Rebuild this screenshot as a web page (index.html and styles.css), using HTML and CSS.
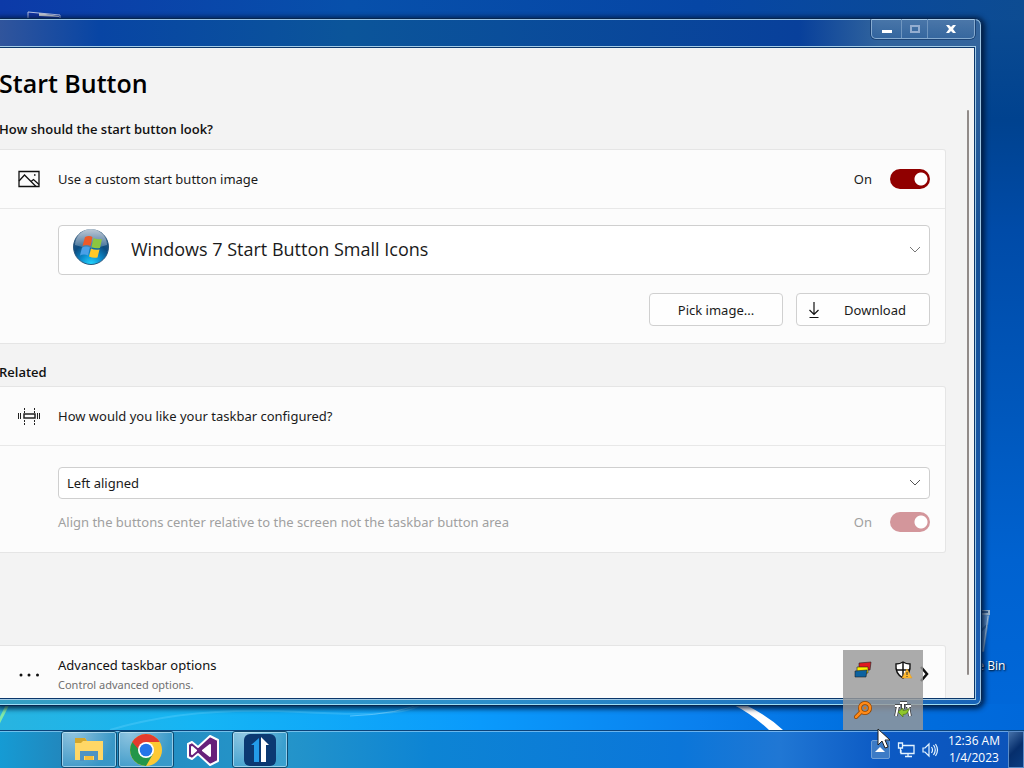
FILE: index.html
```html
<!DOCTYPE html>
<html lang="en">
<head>
    <meta charset="UTF-8">
    <meta name="viewport" content="width=device-width, initial-scale=1.0">
    <title>Start Button</title>
    <link rel="stylesheet" href="styles.css">
</head>
<body>
    <div class="desktop">
        <svg class="wallpaper-streaks" viewBox="0 0 1024 26" preserveAspectRatio="none">
            <path d="M-4 24 L8 0" stroke="#7fe8a8" stroke-width="3"/>
            <path d="M110 26 Q190 2 300 8 T420 0" fill="none" stroke="#6fd6ff" stroke-width="2" opacity=".3"/>
            <path d="M350 12 Q400 10 424 -2" fill="none" stroke="#7fd6ff" stroke-width="1" opacity=".6"/>
            <path d="M732 0 L744 0 Q768 12 783 26 L769 26 Q752 10 732 0Z" fill="#fff"/>
        </svg>
        <svg class="folder-shortcut" width="34" height="12" viewBox="0 0 34 12">
            <path d="M1 12 V1 L33 4 V12Z" fill="#1233a0" stroke="#b8c4e8" stroke-width="1"/>
            <path d="M12 2 L32 5 V6 L12 5Z" fill="#d0d4d8"/>
        </svg>
        <div class="recycle-bin">
            <svg width="36" height="44" viewBox="0 0 36 44">
                <path d="M2 3 H34 L28 43 H8Z" fill="#7da6cc" opacity=".75"/>
                <path d="M2 1 H34 V6 H2Z" fill="#9ebad2"/>
                <path d="M4 3 H32" stroke="#38618f" stroke-width="2"/>
                <path d="M24 9 L22 41 M31 16 L25 22" stroke="#3569a0" stroke-width="2"/>
                <path d="M32 7 L27 42" stroke="#afcce5" stroke-width="1"/>
            </svg>
            <span>Recycle Bin</span>
        </div>

        <main class="window">
            <div class="titlebar">
                <div class="window-buttons">
                    <button class="minimize" aria-label="Minimize">
                        <svg width="12" height="12" viewBox="0 0 12 12"><path d="M1 7h10v3H1z" fill="#fff"/></svg>
                    </button>
                    <button class="maximize" aria-label="Maximize">
                        <svg width="12" height="12" viewBox="0 0 12 12"><path d="M2 3h8v6H2z" fill="none" stroke="#94add0" stroke-width="2"/></svg>
                    </button>
                    <button class="close" aria-label="Close">
                        <svg width="12" height="12" viewBox="0 0 12 12"><path d="M1 2h3l2 2 2-2h3L8 6l3 4H8L6 8l-2 2H1l3-4z" fill="#fff"/></svg>
                    </button>
                </div>
            </div>

            <div class="content">
                <h1>Start Button</h1>
                <div class="page">
                    <h2>How should the start button look?</h2>
                    <section class="card">
                        <div class="card-head">
                            <svg class="icon" width="24" height="24" viewBox="0 0 24 24" fill="none" stroke="#111" stroke-width="1.3">
                                <path d="M2 4.500h20v15H2z"/>
                                <path d="M2 14l5.500-6L19 19.500M14 14.500l2.500-2 5.500 5"/>
                                <path d="M17 8h1.500"/>
                            </svg>
                            <label for="custom">Use a custom start button image</label>
                            <span class="state">On</span>
                            <input type="checkbox" class="toggle" id="custom" checked>
                        </div>
                        <div class="card-body">
                            <div class="select-box">
                                <svg class="orb" width="38" height="38" viewBox="0 0 38 38">
                                    <defs>
                                        <radialGradient id="orbFill" cx=".5" cy="1" r="1">
                                            <stop offset="0" stop-color="#25d8ff"/>
                                            <stop offset=".3" stop-color="#0c8fd0"/>
                                            <stop offset=".6" stop-color="#0c4c80"/>
                                            <stop offset="1" stop-color="#3f6288"/>
                                        </radialGradient>
                                        <linearGradient id="orbShine" x1="0" y1="0" x2="0" y2="1">
                                            <stop offset="0" stop-color="#fff" stop-opacity=".65"/>
                                            <stop offset="1" stop-color="#fff" stop-opacity=".2"/>
                                        </linearGradient>
                                    </defs>
                                    <circle cx="19" cy="19" r="17.500" fill="url(#orbFill)" stroke="#2a567c"/>
                                    <path d="M3 17 A16 16 0 0 1 35 17 Q19 23 3 17Z" fill="url(#orbShine)"/>
                                    <path d="M13 9q4-2 7.500 0l-2 9q-4-2-8 0z" fill="#ee5a28"/>
                                    <path d="M21.500 10q4 2 8.500 1l-2 9q-4 1-8.500-1z" fill="#8cc63f"/>
                                    <path d="M10 19.500q4-2 8 0l-2 8q-4-2-8 0z" fill="#4aa0e8"/>
                                    <path d="M19 20.500q4 2 8.500 1l-2 8q-4 1-8.500-1z" fill="#ffc928"/>
                                </svg>
                                <select class="large" aria-label="Start button image">
                                    <option>Windows 7 Start Button Small Icons</option>
                                </select>
                                <svg class="chevron" width="12" height="8" viewBox="0 0 12 8"><path d="M1 1l5 5 5-5" fill="none" stroke="#777"/></svg>
                            </div>
                            <div class="actions">
                                <button class="btn">Pick image...</button>
                                <button class="btn">
                                    <svg width="16" height="18" viewBox="0 0 16 18" fill="none" stroke="#111" stroke-width="1.2"><path d="M8 1v12M3.500 9L8 13.500 12.500 9M3.500 16.500h9"/></svg>
                                    <span>Download</span>
                                </button>
                            </div>
                        </div>
                    </section>

                    <h2>Related</h2>
                    <section class="card">
                        <div class="card-head">
                            <svg class="icon" width="24" height="24" viewBox="0 0 24 24" fill="none" stroke="#222">
                                <path d="M7 10h11v4H7z" stroke-width="1.500"/>
                                <path d="M1.500 9v6M3.500 9v6M20.500 9v6M22.500 9v6"/>
                                <path d="M7.500 4v5M17.500 4v5M7.500 16v5M17.500 16v5" stroke-dasharray="2 1"/>
                            </svg>
                            <label for="align">How would you like your taskbar configured?</label>
                        </div>
                        <div class="card-body taskbar-options">
                            <div class="select-box">
                                <select id="align">
                                    <option>Left aligned</option>
                                    <option>Center aligned</option>
                                </select>
                                <svg class="chevron" width="12" height="8" viewBox="0 0 12 8"><path d="M1 1l5 5 5-5" fill="none" stroke="#555"/></svg>
                            </div>
                            <div class="option disabled">
                                <label for="center">Align the buttons center relative to the screen not the taskbar button area</label>
                                <span class="state">On</span>
                                <input type="checkbox" class="toggle" id="center" checked disabled>
                            </div>
                        </div>
                    </section>

                    <a href="#" class="card advanced">
                        <svg class="icon" width="24" height="24" viewBox="0 0 24 24" fill="#111"><circle cx="4" cy="12" r="1.500"/><circle cx="12" cy="12" r="1.500"/><circle cx="20.500" cy="12" r="1.500"/></svg>
                        <span class="advanced-text">
                            <span>Advanced taskbar options</span>
                            <small>Control advanced options.</small>
                        </span>
                        <svg width="10" height="18" viewBox="0 0 10 18"><path d="M2 1l6 7-6 7" fill="none" stroke="#111" stroke-width="2.500"/></svg>
                    </a>
                </div>
                <div class="scroll-thumb"></div>
            </div>
        </main>

        <div class="tray-popup">
            <svg width="20" height="20" viewBox="0 0 20 20" stroke="#222" stroke-width=".6">
                <path d="M6 3l12-1-1 8H6z" fill="#e01820"/>
                <path d="M4 7l11 0v6H4z" fill="#fff000"/>
                <path d="M2 11l12-1-1 7H2z" fill="#0c62a0"/>
            </svg>
            <svg width="20" height="20" viewBox="0 0 20 20">
                <path d="M10 2q3 2 7 2 1 10-7 14Q2 14 3 4q4 0 7-2z" fill="#fff" stroke="#111" stroke-width="1.400"/>
                <path d="M10 2v16M3 10h14" stroke="#111" stroke-width="1.500"/>
                <path d="M14 9l5 9H9z" fill="#ffb92e" stroke="#e0961b" stroke-width=".5"/>
                <path d="M14 12v3M14 16v1" stroke="#333"/>
            </svg>
            <svg width="20" height="20" viewBox="0 0 20 20" fill="none">
                <path d="M8 12l-5 5" stroke="#914500" stroke-width="4" stroke-linecap="round"/>
                <circle cx="12" cy="8" r="5" stroke="#914500" stroke-width="4"/>
                <path d="M8 12l-5 5" stroke="#ff8a18" stroke-width="2.500" stroke-linecap="round"/>
                <circle cx="12" cy="8" r="5" stroke="#ff8a18" stroke-width="2.500"/>
                <circle cx="12" cy="8" r="1.500" fill="#e87508"/>
            </svg>
            <svg width="20" height="20" viewBox="0 0 20 20" fill="none">
                <path d="M2 6h5M5 6l-2 10M7 3h7M10 3v6M13 6h5M15 6l2 10" stroke="#333" stroke-width="3.500"/>
                <path d="M2 6h5M5 6l-2 10M7 3h7M10 3v6M13 6h5M15 6l2 10" stroke="#fff" stroke-width="2"/>
                <path d="M5 12l5-4v2.500q4 0 6-2-1 6-6 6V17z" fill="#8fc72b" stroke="#4c7514" stroke-width=".7"/>
            </svg>
        </div>
    </div>

    <footer class="taskbar">
        <nav class="apps">
            <button class="app running" aria-label="File Explorer">
                <svg width="32" height="32" viewBox="0 0 32 32">
                    <path d="M2 4h10l2 3h16v19H2z" fill="#ffd766"/>
                    <path d="M2 4h10l2 3h-4l-2 2H2z" fill="#d4a72c"/>
                    <path d="M7 27V17h18v10h-4v-5H11v5z" fill="#4e93c2"/>
                    <path d="M12 22h8v4h-8z" fill="#f4bd3a"/>
                </svg>
            </button>
            <button class="app running" aria-label="Chrome">
                <svg width="32" height="32" viewBox="0 0 32 32">
                    <circle cx="16" cy="16" r="16" fill="#fcc934"/>
                    <path d="M16 16L2.200 8A16 16 0 0 0 16 32l7-12z" fill="#23964a"/>
                    <path d="M16 16H9L2.200 8A16 16 0 0 1 29.800 8H16z" fill="#e33b2e"/>
                    <circle cx="16" cy="16" r="8" fill="#fff"/>
                    <circle cx="16" cy="16" r="6.300" fill="#2475e8"/>
                </svg>
            </button>
            <button class="app" aria-label="Visual Studio">
                <svg width="34" height="32" viewBox="0 0 34 32">
                    <path d="M24 2l8 4v21l-8 4L12 20l-6 5-4-2V10l4-2 6 5zM24 11l-7 5.500 7 5.500zM6 13v7l4-3.500z" fill="#67217a" fill-rule="evenodd" stroke="#fff" stroke-width="2" stroke-linejoin="round"/>
                    <path d="M24 11v11l-7-5.500zM6 13l4 3.500L6 20z" fill="#fff"/>
                </svg>
            </button>
            <button class="app running" aria-label="Start button settings">
                <svg width="32" height="32" viewBox="0 0 32 32">
                    <rect width="32" height="32" rx="6" fill="#0b3972"/>
                    <path d="M7 11l8-7v24h-5V11z" fill="#239be9"/>
                    <path d="M17 28V3l8 8h-3v17z" fill="#fff"/>
                </svg>
            </button>
        </nav>
        <div class="tray">
            <button class="show-hidden" aria-label="Show hidden icons">
                <svg width="10" height="6" viewBox="0 0 10 6"><path d="M5 0l5 5H0z" fill="#fff"/></svg>
            </button>
            <svg width="18" height="18" viewBox="0 0 18 18" fill="none" stroke="#e4f4ff" stroke-width="1.300">
                <path d="M6 4.500h11v8H4V9M8 15.500h7M11 13v2M1.500 2v5h4V2zM3.500 7v5"/>
            </svg>
            <svg width="18" height="18" viewBox="0 0 18 18" fill="none" stroke="#e4f4ff" stroke-width="1.200">
                <path d="M2 7h2l4-4v12l-4-4H2zM10.500 6q2 3 0 6M12.500 4q3.500 5 0 10M14.500 3q4 6 0 12"/>
            </svg>
            <div class="clock">
                <time>12:36 AM</time>
                <time>1/4/2023</time>
            </div>
            <button class="show-desktop" aria-label="Show desktop"></button>
        </div>
    </footer>
    <svg class="cursor" width="14" height="21" viewBox="0 0 14 21"><path d="M1 1v16l4-4 3 7 3-1-3-7h5z" fill="#fff" stroke="#222"/></svg>
</body>
</html>
```

FILE: styles.css
```css
* {
    box-sizing: border-box;
}
body {
    margin: 0;
    height: 100vh;
    display: flex;
    flex-direction: column;
    overflow: hidden;
    position: relative;
    font-family: "Noto Sans", "Open Sans", sans-serif;
    font-size: 13px;
    line-height: 20px;
    color: #1a1a1a;
    background: #0058bd;
}
button, select, input {
    font: inherit;
    color: inherit;
    margin: 0;
}

/* Desktop */
.desktop {
    flex: 1;
    min-height: 0;
    position: relative;
    background:
        linear-gradient(90deg, #28b4e0 0, #15b5f5 200px, #0a9afc 480px, #0a80ee 700px, #0070e0 850px, #0068da 100%) bottom / 100% 26px no-repeat,
        linear-gradient(90deg, #0c3aa8 0, #0750ab 350px, #0646a5 700px, #0d4c92 100%) top / 100% 20px no-repeat,
        linear-gradient(#0d4c92 0, #00428f 120px, #004ba8 230px, #0058bd 420px, #0062d0 560px, #0068da 100%);
}
.wallpaper-streaks {
    position: absolute;
    left: 0;
    bottom: 0;
    width: 100%;
    height: 26px;
}
.folder-shortcut {
    position: absolute;
    left: 27px;
    top: 11px;
}
.recycle-bin {
    position: absolute;
    right: 19px;
    bottom: 55px;
    width: 68px;
    display: flex;
    flex-direction: column;
    align-items: center;
    gap: 4px;
    padding-left: 6px;
    color: #fff;
    font-family: "Open Sans", sans-serif;
    font-size: 12px;
    line-height: 18px;
    white-space: nowrap;
    text-shadow: 1px 1px 2px #000;
}

/* Window */
.window {
    position: absolute;
    left: -2px;
    right: 42px;
    top: 18px;
    bottom: 24px;
    display: flex;
    flex-direction: column;
    padding: 0 7px 7px 0;
    border: 1px solid #06264f;
    border-radius: 0 7px 7px 0;
    background:
        linear-gradient(90deg, #35a0c4, #2b8fcb 50%, #1763b8) bottom / 100% 8px no-repeat,
        linear-gradient(90deg, #31559c 0, #0845a4 100px, #0b559a 350px, #08409b 800px, #30639d 880px, #34659d 100%) top / 100% 29px no-repeat,
        linear-gradient(#34659d, #155096 35%, #1b5eb4);
    box-shadow: inset -1px 0 #9cc5e5, inset 0 1px #9cc5e5, inset 0 -1px #9cdcf4, 1px 1px 5px 2px rgba(0, 20, 50, 0.8);
}
.titlebar {
    flex: none;
    height: 29px;
    display: flex;
    justify-content: flex-end;
}
.window-buttons {
    display: flex;
    height: 20px;
    margin-right: -1px;
    border: 1px solid #86abd0;
    border-top: 0;
    border-radius: 0 0 5px 5px;
    box-shadow: 0 0 0 1px rgba(5, 35, 80, 0.5);
}
.window-buttons button {
    display: flex;
    align-items: center;
    justify-content: center;
    padding: 0;
    border: 0;
    background: linear-gradient(rgba(255, 255, 255, 0.12), rgba(255, 255, 255, 0.02));
}
.window-buttons .minimize {
    width: 29px;
}
.window-buttons .maximize {
    width: 27px;
    border-left: 1px solid #6f96c0;
    border-right: 1px solid #6f96c0;
}
.window-buttons .close {
    width: 46px;
}
.content {
    flex: 1;
    min-height: 0;
    position: relative;
    overflow: hidden;
    padding: 15px 28px 0 0;
    background: #f3f3f3;
    box-shadow: 0 0 0 1px #0b376b, 0 0 0 2px #a4cbe5;
}
h1, h2, select.large {
    font-family: "Open Sans", sans-serif;
}
h1 {
    margin: 0 0 16px;
    font-size: 25px;
    line-height: 40px;
    font-weight: 600;
    color: #000;
}
h2 {
    margin: 0;
    font-size: 13px;
    line-height: 20px;
    font-weight: 600;
    color: #111;
}
.card {
    margin: 10px 0 18px;
    border: 1px solid #e5e5e5;
    border-left: 0;
    border-radius: 0 3px 3px 0;
    background: #fcfcfc;
}
.card + h2 {
    margin-bottom: -6px;
}
.card-head {
    display: flex;
    align-items: center;
    height: 59px;
    padding: 0 15px 0 18px;
    border-bottom: 1px solid #e8e8e8;
}
.icon {
    flex: none;
    margin-right: 17px;
}
.card-head label, .option label {
    flex: 1;
}
.state {
    margin-right: 18px;
}
.toggle {
    appearance: none;
    width: 40px;
    height: 20px;
    border-radius: 10px;
    background: radial-gradient(circle at 31px 10px, #fff 6px, transparent 7px) #900000;
}
.card-body {
    padding: 16px 15px 17px 59px;
}
.select-box {
    display: grid;
    position: relative;
}
select {
    appearance: none;
    width: 100%;
    height: 32px;
    padding: 0 32px 0 8px;
    border: 1px solid #cfcfcf;
    border-radius: 4px;
    background: #fff;
}
select.large {
    height: 50px;
    padding-left: 72px;
    padding-bottom: 2px;
    font-size: 18px;
}
.orb {
    position: absolute;
    left: 14px;
    top: 3px;
}
.chevron {
    position: absolute;
    right: 9px;
    top: calc(50% - 4px);
}
.actions {
    display: flex;
    justify-content: flex-end;
    gap: 13px;
    margin-top: 18px;
}
.btn {
    display: flex;
    align-items: center;
    justify-content: center;
    width: 134px;
    height: 33px;
    padding: 0 9px;
    border: 1px solid #d0d0d0;
    border-radius: 4px;
    background: #fefefe;
}
.btn span {
    flex: 1;
    padding-left: 8px;
}
.taskbar-options {
    padding-top: 21px;
    padding-bottom: 20px;
}
.option {
    display: flex;
    align-items: center;
    margin-top: 13px;
}
.disabled {
    color: #a0a0a0;
}
.disabled .toggle {
    background-color: #d3969b;
}
.advanced {
    display: flex;
    align-items: center;
    height: 60px;
    margin: 92px 0 0;
    padding: 0 16px 0 18px;
    color: #111;
    text-decoration: none;
}
.advanced-text {
    flex: 1;
    display: flex;
    flex-direction: column;
}
.advanced small {
    font-size: 11px;
    line-height: 20px;
    color: #707070;
}
.scroll-thumb {
    position: absolute;
    right: 5px;
    top: 62px;
    bottom: 23px;
    width: 2px;
    border-radius: 1px;
    background: #918b89;
}

/* Hidden icons */
.tray-popup {
    position: absolute;
    right: 101px;
    bottom: 0;
    display: grid;
    grid-template-columns: 40px 40px;
    grid-template-rows: 40px 40px;
    place-items: center;
    background: rgba(152, 152, 152, 0.82);
}

/* Taskbar */
.taskbar {
    flex: none;
    height: 38px;
    display: flex;
    justify-content: space-between;
    border-top: 1px solid #0b437a;
    background: linear-gradient(90deg, #159bd4 0, #2188be 60px, #2595c9 280px, #0d84d4 430px, #0b76d9 680px, #2077d4 780px, #0c5ac4 880px, #0c53b9 100%);
    box-shadow: inset 0 1px rgba(170, 220, 255, 0.6);
}
.apps {
    display: flex;
    gap: 1px;
    padding-left: 61px;
}
.app {
    display: flex;
    align-items: center;
    justify-content: center;
    width: 56px;
    padding: 0;
    border: 1px solid transparent;
    background: none;
}
.app.running {
    border-color: #0e4a70;
    border-radius: 3px;
    background: radial-gradient(circle at 20% 0, rgba(255, 255, 255, 0.5), rgba(255, 255, 255, 0.1) 75%);
    box-shadow: inset 0 0 0 1px rgba(210, 240, 255, 0.6);
}
.tray {
    display: flex;
    align-items: center;
    gap: 6px;
    color: #fff;
}
.show-hidden {
    display: flex;
    align-items: center;
    justify-content: center;
    width: 19px;
    height: 19px;
    margin-right: 1px;
    padding: 0;
    border: 1px solid #6f9fd6;
    border-radius: 2px;
    background: #3c7bc6;
}
.clock {
    display: flex;
    flex-direction: column;
    align-items: center;
    margin: 0 2px 0 3px;
    padding-bottom: 2px;
    font-family: "Open Sans", sans-serif;
    font-size: 12px;
    line-height: 17px;
}
.show-desktop {
    align-self: stretch;
    width: 16px;
    padding: 0;
    border: 1px solid #5a8cc8;
    background: linear-gradient(135deg, #4470a8, #062e6c 50%, #0a3c80);
}
.cursor {
    position: absolute;
    right: 133px;
    bottom: 19px;
}
```
